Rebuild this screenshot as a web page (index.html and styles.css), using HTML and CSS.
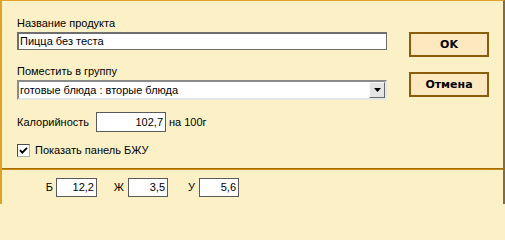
FILE: index.html
```html
<!DOCTYPE html>
<html lang="ru">
<head>
<meta charset="utf-8">
<title>Продукт</title>
<link rel="stylesheet" href="styles.css">
</head>
<body>
<div class="dialog">
  <div class="top">
    <div class="form">
      <div class="label">Название продукта</div>
      <div class="textbox name">Пицца без теста</div>
      <div class="label label-group">Поместить в группу</div>
      <div class="combo">
        <span class="combo-text">готовые блюда : вторые блюда</span>
        <span class="combo-btn"><svg width="7" height="4" viewBox="0 0 7 4"><path d="M0 0H7L3.5 4Z" fill="#000"/></svg></span>
      </div>
      <div class="cal-row">
        <span class="cal-label">Калорийность</span>
        <span class="numbox cal">102,7</span>
        <span class="unit">на 100г</span>
      </div>
      <div class="check-row">
        <span class="checkbox"><svg width="11" height="11" viewBox="0 0 11 11"><path d="M2 5.2L4.3 7.6L9 2.8" fill="none" stroke="#000" stroke-width="1.9"/></svg></span>
        <span class="check-label">Показать панель БЖУ</span>
      </div>
    </div>
    <div class="buttons">
      <div class="btn">OK</div>
      <div class="btn btn-cancel">Отмена</div>
    </div>
  </div>
  <div class="divider"></div>
  <div class="bju">
    <span class="bju-label first">Б</span>
    <span class="numbox small wide">12,2</span>
    <span class="bju-label">Ж</span>
    <span class="numbox small">3,5</span>
    <span class="bju-label">У</span>
    <span class="numbox small">5,6</span>
  </div>
</div>
</body>
</html>
```
FILE: styles.css
```css
html {
  margin: 0;
  padding: 0;
  background: #fcf1c6;
  min-height: 100%;
}
body {
  margin: 0;
  padding: 0;
  width: 505px;
  height: 204px;
  overflow: hidden;
  background: #fcf1c6;
  font-family: "Liberation Sans", Arial, sans-serif;
  font-size: 11px;
  color: #000;
}
.dialog {
  width: 501px;
  height: 203px;
  background: #fcf1c6;
  border-top: 1px solid #e2a126;
  border-left: 2px solid #e2a126;
  border-right: 2px solid #7f6b45;
}
.top {
  display: flex;
  height: 167px;
}
.form {
  width: 370px;
  padding-left: 15px;
  padding-top: 16px;
  display: flex;
  flex-direction: column;
}
.label {
  line-height: 13px;
  height: 13px;
  margin-bottom: 2px;
}
.label-group {
  margin-top: 15px;
}
.textbox {
  box-sizing: border-box;
  height: 18px;
  background: #fff;
  border: 1px solid #6f6f6f;
  border-top-width: 2px;
  border-left-width: 2px;
  line-height: 14px;
  padding-left: 1px;
  white-space: nowrap;
}
.combo {
  box-sizing: border-box;
  height: 20px;
  background: #fff;
  border: 2px solid;
  border-color: #8a8a8a #e6e6e6 #e6e6e6 #8a8a8a;
  display: flex;
  align-items: center;
  justify-content: space-between;
}
.combo-text {
  padding-left: 1px;
  line-height: 14px;
}
.combo-btn {
  box-sizing: border-box;
  width: 16px;
  height: 16px;
  background: #e4e4e4;
  border: 1px solid;
  border-color: #fafafa #6a6a6a #6a6a6a #fafafa;
  display: flex;
  align-items: center;
  justify-content: center;
}
.cal-row {
  margin-top: 12px;
  display: flex;
  align-items: center;
  height: 20px;
}
.cal-label {
  width: 79px;
  line-height: 13px;
}
.numbox {
  box-sizing: border-box;
  background: #fff;
  border: 1px solid #5a5a5a;
  text-align: right;
  padding-right: 2px;
  white-space: nowrap;
}
.cal {
  width: 70px;
  height: 20px;
  line-height: 18px;
}
.unit {
  margin-left: 3px;
  line-height: 13px;
}
.check-row {
  margin-top: 12px;
  display: flex;
  align-items: center;
  height: 13px;
}
.checkbox {
  box-sizing: border-box;
  width: 13px;
  height: 13px;
  background: #fff;
  border: 1px solid;
  border-color: #4a4a4a #b0b0b0 #b0b0b0 #4a4a4a;
  display: flex;
  align-items: center;
  justify-content: center;
}
.checkbox svg {
  display: block;
}
.check-label {
  margin-left: 5px;
  line-height: 13px;
}
.buttons {
  margin-left: 22px;
  padding-top: 31px;
  display: flex;
  flex-direction: column;
}
.btn {
  box-sizing: border-box;
  width: 80px;
  height: 25px;
  background: #fde8bf;
  border: 2px solid #8b5c0a;
  font-family: "DejaVu Sans", Verdana, sans-serif;
  font-weight: bold;
  font-size: 11px;
  line-height: 21px;
  text-align: center;
}
.btn-cancel {
  margin-top: 15px;
}
.divider {
  height: 0;
  border-top: 1px solid #a56d00;
  border-bottom: 1px solid #c78b14;
}
.bju {
  display: flex;
  align-items: center;
  padding-top: 8px;
  padding-left: 40px;
}
.bju-label {
  box-sizing: border-box;
  width: 31px;
  text-align: right;
  padding-right: 4px;
  line-height: 13px;
}
.bju-label.first {
  width: 14px;
  padding-right: 3px;
}
.numbox.small {
  width: 40px;
  height: 19px;
  line-height: 17px;
}
.numbox.small.wide {
  width: 41px;
}
```
